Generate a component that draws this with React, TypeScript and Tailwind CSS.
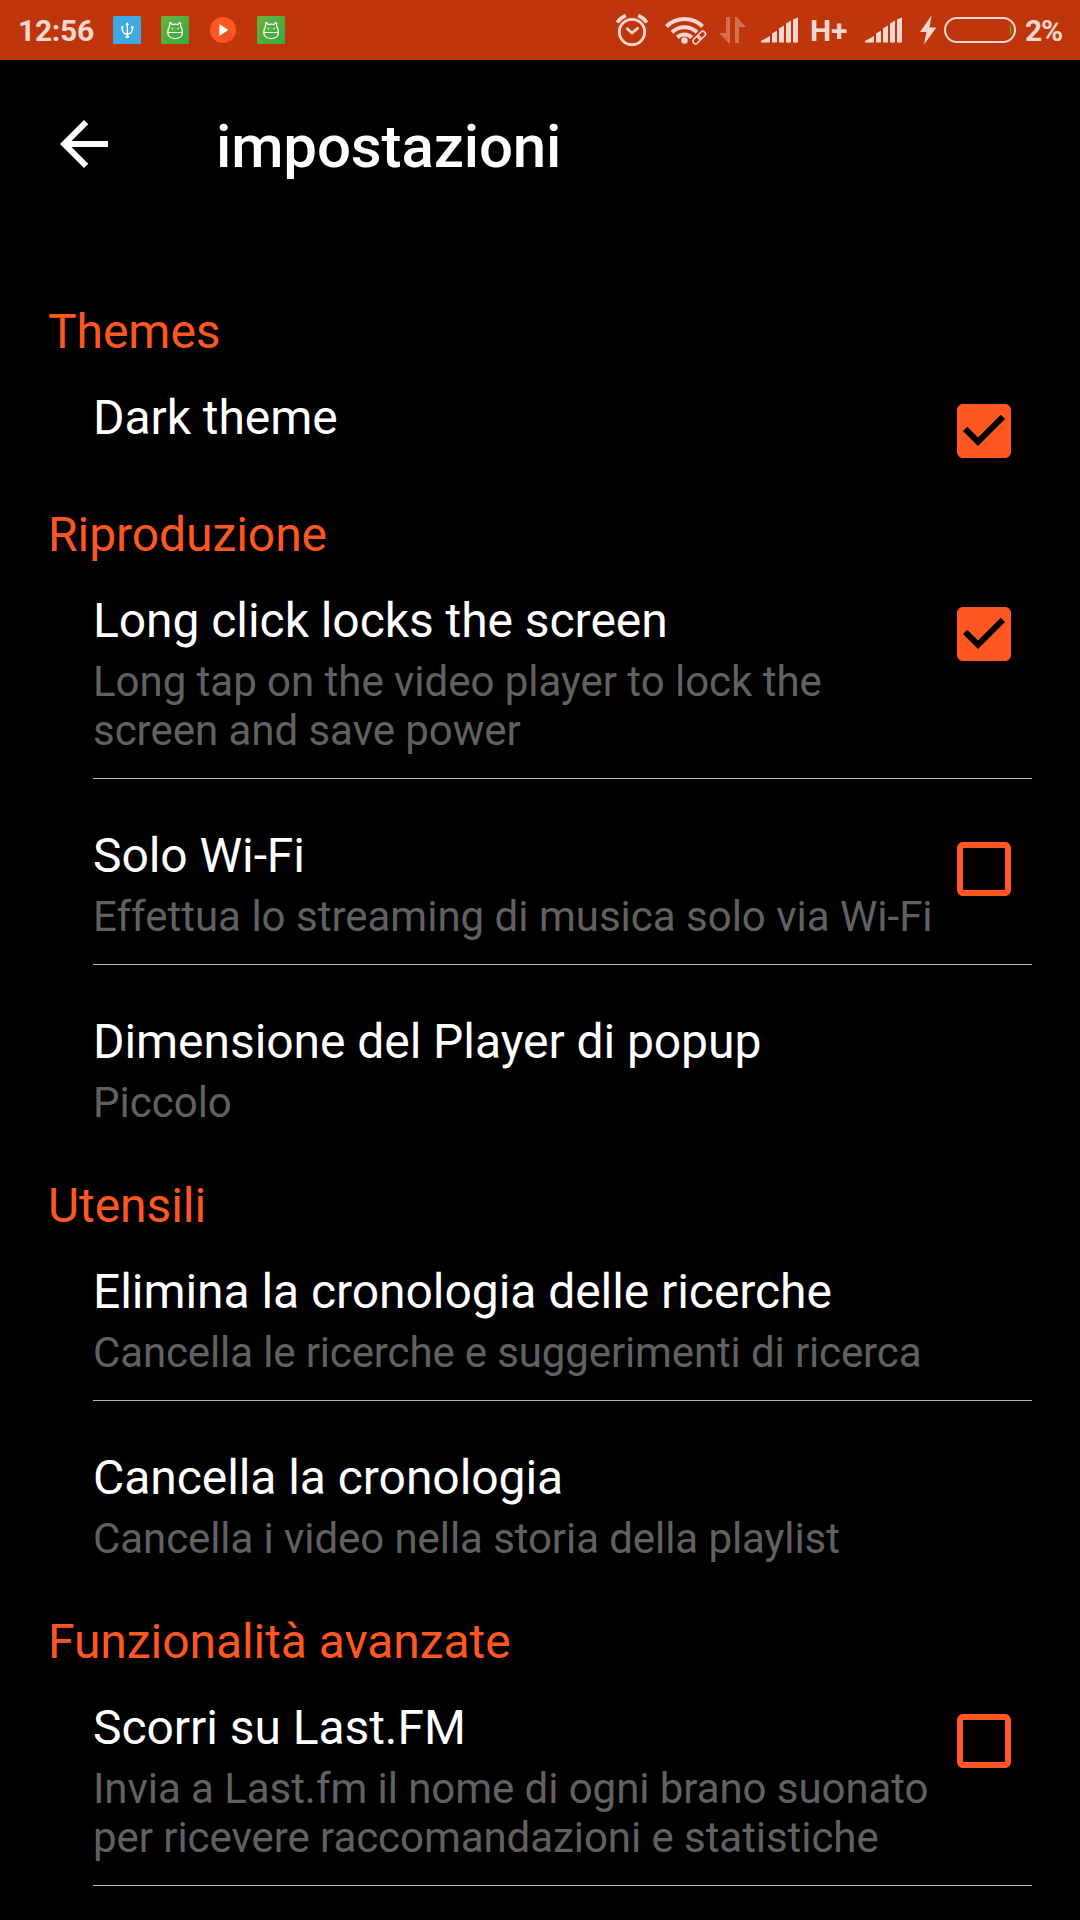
import React, { useState } from 'react';

interface SettingItem {
  id: string;
  title: string;
  summary?: string;
  summaryClass?: string;
  checkbox?: boolean;
}

interface SettingSection {
  title: string;
  items: SettingItem[];
}

const SECTIONS: SettingSection[] = [
  {
    title: 'Themes',
    items: [{ id: 'dark', title: 'Dark theme', checkbox: true }],
  },
  {
    title: 'Riproduzione',
    items: [
      {
        id: 'lock',
        title: 'Long click locks the screen',
        summary: 'Long tap on the video player to lock the screen and save power',
        summaryClass: 'tracking-[-0.03px]',
        checkbox: true,
      },
      {
        id: 'wifi',
        title: 'Solo Wi-Fi',
        summary: 'Effettua lo streaming di musica solo via Wi-Fi',
        checkbox: true,
      },
      { id: 'popup', title: 'Dimensione del Player di popup', summary: 'Piccolo' },
    ],
  },
  {
    title: 'Utensili',
    items: [
      {
        id: 'searches',
        title: 'Elimina la cronologia delle ricerche',
        summary: 'Cancella le ricerche e suggerimenti di ricerca',
        summaryClass: 'tracking-[-0.13px]',
      },
      {
        id: 'history',
        title: 'Cancella la cronologia',
        summary: 'Cancella i video nella storia della playlist',
        summaryClass: 'tracking-[-0.08px]',
      },
    ],
  },
  {
    title: 'Funzionalità avanzate',
    items: [
      {
        id: 'lastfm',
        title: 'Scorri su Last.FM',
        summary: 'Invia a Last.fm il nome di ogni brano suonato per ricevere raccomandazioni e statistiche',
        summaryClass: 'tracking-[-0.06px]',
        checkbox: true,
      },
      { id: 'more', title: '' },
    ],
  },
];

const UsbIcon = () => (
  <svg className="h-7 w-7" viewBox="0 0 28 28" fill="none" stroke="#fff" strokeWidth="1.4">
    <rect width="28" height="28" rx="1.5" fill="#3fa9e1" stroke="none" />
    <path d="M14.3 8v12M9.300 11v2c0 3 2 5 5 5s5-2 5-5v-2" />
    <path d="M14.300 6l2 3h-4zM8.100 10.300h2.300v2.300H8.100zM18.200 10.300h2.300v2.300h-2.300zM12.600 19.500h3.400v2.500h-3.400z" fill="#fff" stroke="none" />
  </svg>
);

const AndroidIcon = () => (
  <svg className="h-7 w-7" viewBox="0 0 28 28" fill="none" stroke="#fff" strokeWidth="1.2">
    <defs>
      <linearGradient id="droid" x1="0" y1="0" x2="1" y2="1">
        <stop offset="0" stopColor="#6db33a" />
        <stop offset="1" stopColor="#32ab42" />
      </linearGradient>
    </defs>
    <rect width="28" height="28" rx="1.5" fill="url(#droid)" stroke="none" />
    <path d="M6.800 16.500h14.600c.3 3.600-3.200 6.100-7.300 6.100s-7.600-2.500-7.300-6.100z" />
    <path d="M6.800 16.500c-.1-2.600.4-4.300 1.700-5.800L8.600 7c1-.8 1.700-.4 2.400 1.600 2-.6 4.200-.6 6.200 0 .7-2 1.400-2.400 2.400-1.600l.1 3.700c1.300 1.500 1.800 3.200 1.700 5.800" />
    <path d="M10.500 12.700h1.500M16.200 12.700h1.500" />
  </svg>
);

const PlayIcon = () => (
  <svg className="h-7 w-7" viewBox="0 0 28 28">
    <circle cx="14" cy="14.600" r="13.100" fill="#a8300b" />
    <circle cx="14" cy="14" r="13.100" fill="#ff5722" />
    <path d="M10.300 20l8.700-6 6.300 6.500a13 13 0 0 1-7.300 6z" fill="#ee4f20" />
    <path d="M10.300 8v12l9-6z" fill="#fff" />
  </svg>
);

const AlarmIcon = () => (
  <svg className="h-8 w-8" viewBox="0 0 32 32" fill="none" stroke="#f4d7ce" strokeWidth="2.700">
    <circle cx="16" cy="18" r="12.700" />
    <path d="M10.500 14l5.500 5 6.500-5.500" />
    <path d="M1.300 8.500Q4 4 9.800 1.500M30.700 8.500Q28 4 22.200 1.500" strokeWidth="3.600" />
  </svg>
);

const WifiIcon = () => (
  <svg className="h-8 w-[42px]" viewBox="0 0 42 32" fill="none" stroke="#f4d7ce">
    <path d="M1.500 12.500a25.500 25.500 0 0 1 36 0" strokeWidth="4" />
    <path d="M7 18.300a18 18 0 0 1 25 0" strokeWidth="4" />
    <path d="M12.300 23.500a10.300 10.300 0 0 1 14.400 0" strokeWidth="4" />
    <circle cx="19.500" cy="26.500" r="3.200" fill="#f4d7ce" stroke="none" />
    <path d="M27 24l7-7h8v8l-7 7h-8z" fill="#bf360c" stroke="none" />
    <g strokeWidth="1.600" transform="rotate(-45 34.200 23.500)">
      <rect x="26.500" y="20.900" width="8.700" height="5.200" rx="2.600" />
      <rect x="33.200" y="20.900" width="8.700" height="5.200" rx="2.600" />
    </g>
  </svg>
);

const TransferIcon = () => (
  <svg className="h-7 w-7" viewBox="0 0 28 28" fill="#d3714f">
    <path d="M7 1h4v26H9.500L0 17h7zM16 1h1.500L27 11h-7v16h-4z" />
  </svg>
);

const SignalIcon = () => (
  <svg className="h-[26px] w-[38px]" viewBox="0 0 38 26" fill="#f4d7ce">
    <path d="M0 25.500v-1.500l9-5v6.500zM11 16.500l5-3v12h-5zM18 11.500l5-3v17h-5zM25 6.500l5-3v22h-5zM32 2.500L37 .5v25h-5z" />
  </svg>
);

const BoltIcon = () => (
  <svg className="h-[30px] w-4" viewBox="0 0 16 30" fill="#f4d7ce">
    <path d="M11.500.5L0 17h6.500L4 29.500 16.300 12.500H9.500z" />
  </svg>
);

const BatteryIcon = () => (
  <svg className="h-[26px] w-[72px]" viewBox="0 0 72 26">
    <rect x="1" y="1" width="70" height="24" rx="12" fill="none" stroke="#f4d7ce" strokeWidth="2" />
    <path d="M66 7.500q3 5.500 0 11.500z" fill="#3fc900" />
  </svg>
);

const StatusBar = () => (
  <header className="flex h-[60px] items-center bg-[#bf360c] text-[30px] font-bold tracking-[-0.3px] text-[#f4d7ce]">
    <span className="w-[95px] pl-[18px]">12:56</span>
    <div className="ml-[18px] flex items-center gap-5">
      <UsbIcon />
      <AndroidIcon />
      <PlayIcon />
      <AndroidIcon />
    </div>
    <div className="ml-auto flex w-[464px] items-center">
      <AlarmIcon />
      <div className="ml-[17px]"><WifiIcon /></div>
      <div className="ml-[12px]"><TransferIcon /></div>
      <div className="ml-[14px]"><SignalIcon /></div>
      <span className="ml-[11px] w-[42px] whitespace-nowrap">H+</span>
      <div className="ml-[13px]"><SignalIcon /></div>
      <div className="ml-[17px]"><BoltIcon /></div>
      <div className="ml-[8px]"><BatteryIcon /></div>
      <span className="ml-[9px] tracking-[-1.3px]">2%</span>
    </div>
  </header>
);

const Checkbox: React.FC<{ checked: boolean }> = ({ checked }) => (
  <svg className="h-[72px] w-[72px]" viewBox="0 0 24 24" fill="#ff5722">
    {checked ? (
      <path d="M19 3H5c-1.110 0-2 .9-2 2v14c0 1.100.89 2 2 2h14c1.110 0 2-.9 2-2V5c0-1.100-.89-2-2-2zm-9 14l-5-5 1.410-1.410L10 14.170l7.590-7.590L19 8l-9 9z" />
    ) : (
      <path d="M19 5v14H5V5h14m0-2H5c-1.100 0-2 .9-2 2v14c0 1.100.9 2 2 2h14c1.100 0 2-.9 2-2V5c0-1.100-.9-2-2-2z" />
    )}
  </svg>
);

interface SettingRowProps {
  item: SettingItem;
  checked: boolean;
  last: boolean;
  onToggle: () => void;
}

const SettingRow: React.FC<SettingRowProps> = ({ item, checked, last, onToggle }) => (
  <li className={last ? '' : 'mb-[49px] border-b border-[#b3b3b3] pb-[23px]'}>
    <div className="flex items-start justify-between" onClick={onToggle}>
      <div className="w-[850px]">
        <h3 className="h-14 text-5xl leading-[56px] tracking-[-0.06px] text-white">{item.title}</h3>
        {item.summary && (
          <p className={`mt-2 text-[42px] leading-[49px] text-[#616161] ${item.summaryClass ?? ''}`}>
            {item.summary}
          </p>
        )}
      </div>
      {item.checkbox && (
        <div className="mt-[5px] mr-3 h-[61px]">
          <Checkbox checked={checked} />
        </div>
      )}
    </div>
  </li>
);

export default function App() {
  const [enabled, setEnabled] = useState<Record<string, boolean>>({ dark: true, lock: true });

  const toggle = (id: string) => setEnabled((prev) => ({ ...prev, [id]: !prev[id] }));

  return (
    <div className="h-[1920px] w-[1080px] overflow-hidden bg-black font-[Roboto,sans-serif]">
      <StatusBar />
      <div className="flex h-[168px] items-center pl-12">
        <svg className="h-[72px] w-[72px]" viewBox="0 0 24 24" fill="#fff">
          <path d="M20 11H7.830l5.590-5.590L12 4l-8 8 8 8 1.410-1.410L7.830 13H20v-2z" />
        </svg>
        <h1 className="ml-24 pt-1.5 text-[60px] leading-[70px] font-medium tracking-[-0.12px] text-white">
          impostazioni
        </h1>
      </div>

      <main className="pt-[76px]">
        {SECTIONS.map((section) => (
          <section key={section.title} className="mb-[51px]">
            <h2 className="mb-[30px] pl-12 text-5xl leading-[56px] tracking-[-0.06px] text-[#ff5722]">
              {section.title}
            </h2>
            <ul className="mr-12 ml-[93px]">
              {section.items.map((item, index) => (
                <SettingRow
                  key={item.id}
                  item={item}
                  checked={!!enabled[item.id]}
                  last={index === section.items.length - 1}
                  onToggle={() => toggle(item.id)}
                />
              ))}
            </ul>
          </section>
        ))}
      </main>
    </div>
  );
}
